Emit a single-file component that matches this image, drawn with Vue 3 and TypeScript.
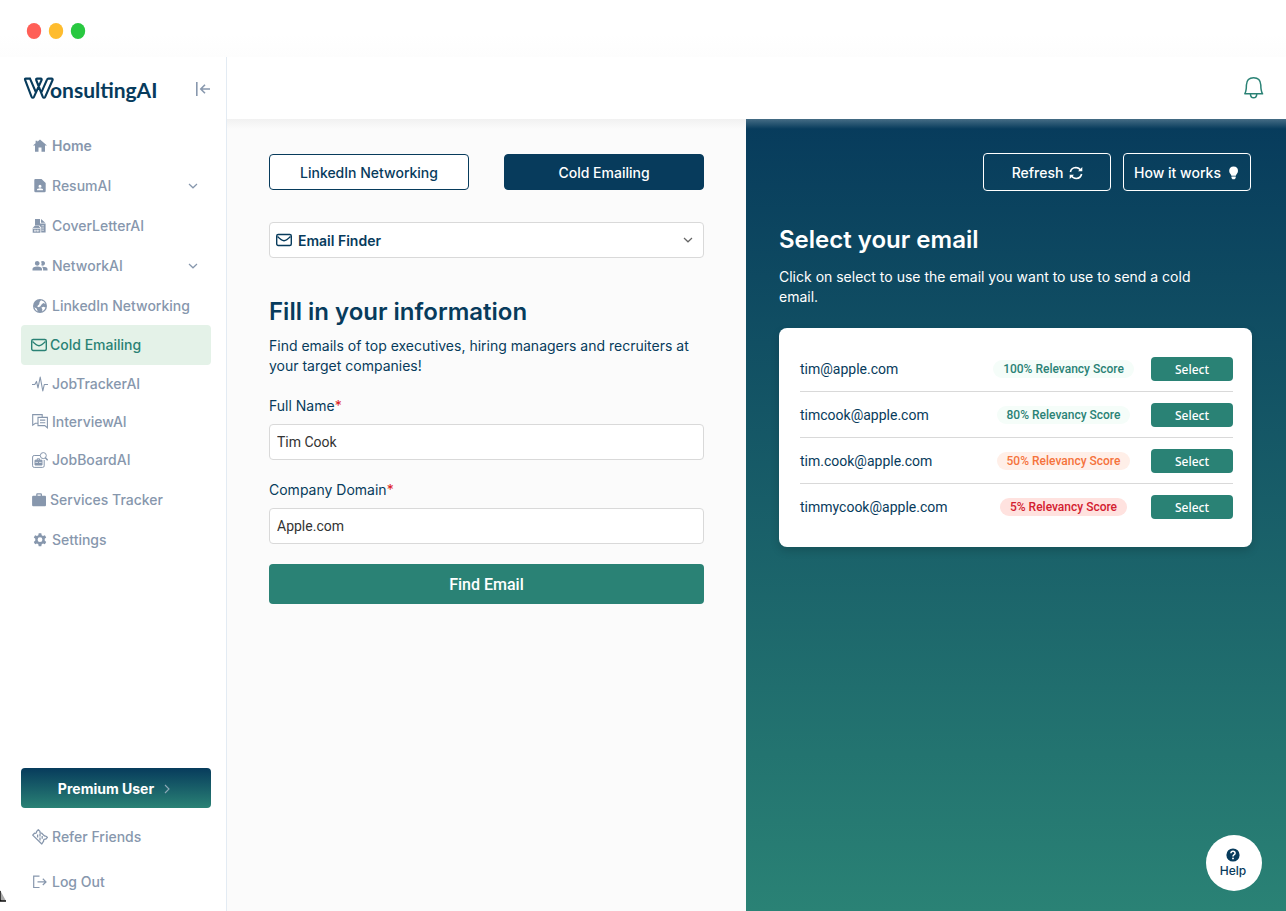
<script setup lang="ts">
import { ref } from 'vue'

interface NavItem {
  label: string
  icon: string
  expandable?: boolean
  size?: string
}

interface EmailMatch {
  email: string
  score: number
  tone: 'good' | 'fair' | 'poor'
}

const navItems: NavItem[] = [
  { label: 'Home', icon: 'home', size: 'strong' },
  { label: 'ResumAI', icon: 'resume', expandable: true },
  { label: 'CoverLetterAI', icon: 'letter' },
  { label: 'NetworkAI', icon: 'people', expandable: true },
  { label: 'LinkedIn Networking', icon: 'globe', size: 'snug' },
  { label: 'Cold Emailing', icon: 'mail', size: 'active' },
  { label: 'JobTrackerAI', icon: 'pulse', size: 'compact' },
  { label: 'InterviewAI', icon: 'chat', size: 'compact' },
  { label: 'JobBoardAI', icon: 'board', size: 'compact' },
  { label: 'Services Tracker', icon: 'case', size: 'tight' },
  { label: 'Settings', icon: 'gear' },
]

const matches: EmailMatch[] = [
  { email: 'tim@apple.com', score: 100, tone: 'good' },
  { email: 'timcook@apple.com', score: 80, tone: 'good' },
  { email: 'tim.cook@apple.com', score: 50, tone: 'fair' },
  { email: 'timmycook@apple.com', score: 5, tone: 'poor' },
]

const tool = ref('Email Finder')
const fullName = ref('Tim Cook')
const domain = ref('Apple.com')
</script>

<template>
  <div class="window">
    <div class="titlebar">
      <svg width="60" height="18" viewBox="0 0 60 18" aria-hidden="true">
        <ellipse cx="8" cy="9" rx="7.2" ry="8" fill="#ff5f57" />
        <ellipse cx="30" cy="9" rx="7.2" ry="8" fill="#febc2e" />
        <ellipse cx="52" cy="9" rx="7.2" ry="8" fill="#28c840" />
      </svg>
    </div>

    <div class="shell">
      <aside class="sidebar">
        <div class="brand-row">
          <a class="brand" href="#" aria-label="WonsultingAI">
            <svg width="32" height="24" viewBox="0 0 32 24" fill="none" stroke="#073b5c" stroke-width="2.1" stroke-linejoin="round" stroke-linecap="round" aria-hidden="true">
              <path d="M7 1.6H2.8Q1.6 1.6 2.1 2.8L8.4 19.4Q9.8 22 11.2 19.4L18.6 3Q19 1.6 17.8 1.6H14.2Q12.8 1.6 13.2 3L19.6 19.4Q21 22 22.4 19.4L29.6 3Q30 1.6 28.7 1.6H25.4Q24.4 1.6 24 2.6L18.6 14.8M7 1.6L12.8 15" />
            </svg>
            <span>onsultingAI</span>
          </a>
          <button class="collapse" type="button" aria-label="Collapse sidebar">
            <svg width="16" height="14" viewBox="0 0 16 14" fill="none" stroke="#8898ae" stroke-width="1.6"><path d="M1.8 0V14M15 7H6M10 2.8L5.8 7L10 11.2" /></svg>
          </button>
        </div>

        <nav class="nav" aria-label="Main">
          <a v-for="item in navItems" :key="item.label" href="#" class="nav-item" :class="item.size">
            <svg class="icon" viewBox="0 0 16 16" width="16" height="16" aria-hidden="true">
              <path v-if="item.icon === 'home'" fill="currentColor" d="M8 1.4L15 7.6H13V13.8H9.5V9.6H6.5V13.8H3V7.6H1L3.6 5.3V2.8H5.4V3.7Z" />
              <path v-else-if="item.icon === 'resume'" fill="currentColor" fill-rule="evenodd" d="M3.3 1H9.5L13.7 5V12.9Q13.7 14.2 12.4 14.2H3.6Q2.3 14.2 2.3 12.9V2Q2.3 1 3.3 1ZM8 6.7A1.5 1.5 0 1 0 8 9.7A1.5 1.5 0 1 0 8 6.7M5 12.2H11V11.7Q11 10.2 8 10.2T5 11.7Z" />
              <g v-else-if="item.icon === 'letter'" fill="currentColor">
                <path d="M3 1H8V5.6H13.6V14.5H9.2V9.5L7.5 7.5H3ZM9 1L13.3 4.8H9Z" />
                <path d="M2.8 7.8H6.6L8.4 9.9V14.8H.7V9.9Z" />
                <path stroke="#fff" stroke-width=".7" fill="none" d="M.8 10.4H8.4M2 12.8H7.4M3 11.6V13.8M5.8 11.6V13.8M9.5 7.8H12M9.5 10H12M9.5 12.2H12" />
              </g>
              <path v-else-if="item.icon === 'people'" fill="currentColor" d="M5.3 2.9A2.4 2.4 0 1 1 5.2 7.7A2.4 2.4 0 0 1 5.3 2.9M10.8 2.9A2.4 2.4 0 1 1 9.3 7.3Q10.1 5.3 9 3.6Q9.7 2.9 10.8 2.9M.5 12.4V11.1Q.5 8.6 5.2 8.6T10 11.1V12.4ZM11.1 12.4V11Q11 9.6 9.8 8.8Q15.5 8.7 15.5 11.1V12.4Z" />
              <g v-else-if="item.icon === 'globe'">
                <circle cx="8" cy="8" r="7" fill="currentColor" />
                <path fill="#fff" d="M9 2.2Q12.4 2.8 13.6 6L11.2 5L9.6 6.4L8.2 8.6L6.2 9.2L5.2 8.2L7.2 6.2L7.6 4ZM9.4 9.6L11.4 8.8L13.6 9.6Q12.6 12.4 10 13.5L10.4 11.4ZM2.3 9.2L4.6 10.4L5.8 13.4Q3.2 12.2 2.3 9.2Z" />
              </g>
              <g v-else-if="item.icon === 'mail'" fill="none" stroke="currentColor" stroke-width="1.4">
                <rect x=".7" y="2.5" width="14.6" height="11" rx="1.5" /><path d="M1.5 4.5Q5.5 8.5 8 8.7Q10.5 8.5 14.5 4.5" />
              </g>
              <path v-else-if="item.icon === 'pulse'" fill="none" stroke="currentColor" stroke-width="1.1" stroke-linejoin="round" d="M0 8.5H2.8L4.5 5.4L6 12L8.2 1L10.8 15L12.3 8.5H16" />
              <path v-else-if="item.icon === 'chat'" fill="none" stroke="currentColor" stroke-width="1.1" d="M5.5 9.2H3.4L.7 11.1V.6H10.2V3.1M6 3.4H15.4V13.8L12.8 11.6H6ZM8 6.1H13.3M8 8.7H13.3" />
              <g v-else-if="item.icon === 'board'" fill="none" stroke="currentColor" stroke-width="1">
                <path d="M8 3.5H2.2Q.6 3.5 .6 5V13.8Q.6 15.4 2.2 15.4H10.6Q12.2 15.4 12.2 13.8V8" />
                <circle cx="11.3" cy="3.6" r="3" /><path d="M13.3 5.7L15.7 8.2" stroke-width="1.4" />
                <path d="M5.2 8V6.8H7.6V8" /><path d="M3 8.2H10V13H3Z" fill="currentColor" /><path d="M3.4 10.4H9.6" stroke="#fff" stroke-width=".7" /><path d="M6.5 9.8V11.2" />
              </g>
              <path v-else-if="item.icon === 'case'" fill="currentColor" fill-rule="evenodd" d="M4.2 3.8V2.5Q4.2 1.3 5.3 1.3H8.8Q10 1.3 10 2.5V3.8H13Q14 3.8 14 5V13Q14 14.2 13 14.2H1.2Q.1 14.2 .1 13V5Q.1 3.8 1.2 3.8ZM5.5 3.8H8.7V2.6H5.5Z" />
              <path v-else fill="currentColor" fill-rule="evenodd" d="M6.7 1.2H9.3L9.7 3.2L11 3.9L12.9 3.2L14.2 5.4L12.7 6.8V8.6L14.2 10L12.9 12.2L11 11.5L9.7 12.3L9.3 14.3H6.7L6.3 12.3L5 11.5L3.1 12.2L1.8 10L3.3 8.6V6.8L1.8 5.4L3.1 3.2L5 3.9L6.3 3.2ZM8 5.3A2.4 2.4 0 1 0 8 10.1A2.4 2.4 0 1 0 8 5.3" />
            </svg>
            <span>{{ item.label }}</span>
            <svg v-if="item.expandable" class="chevron" width="10" height="6" viewBox="0 0 10 6" fill="none" stroke="currentColor" stroke-width="1.2" aria-hidden="true"><path d="M1 1L5 4.8L9 1" /></svg>
          </a>
        </nav>

        <div class="account">
          <button class="premium" type="button">
            Premium User
            <svg width="6" height="10" viewBox="0 0 6 10" fill="none" stroke="#8fa9b8" stroke-width="1.1" aria-hidden="true"><path d="M1 1L5 5L1 9" /></svg>
          </button>
          <a href="#" class="nav-item">
            <svg class="icon" viewBox="0 0 16 16" width="16" height="16" fill="none" stroke="currentColor" stroke-width="1.3" stroke-linejoin="round" aria-hidden="true">
              <path d="M6.3 .7L8 2.4Q7.6 4.4 9.8 4.2L11.8 6.4L13.2 7.2Q14 6.6 15.4 8.4L13.7 10.2Q11.4 9.8 11.6 12.2L9.8 15L.7 6.1L2.5 4.2Q4.8 4.8 4.5 2.6Z" /><path d="M8 4.6V7.4M8 8.6V11.6M5.6 5.6V8.4M10.2 7V9.8" />
            </svg>
            <span>Refer Friends</span>
          </a>
          <a href="#" class="nav-item">
            <svg class="icon" viewBox="0 0 16 16" width="16" height="16" fill="none" stroke="currentColor" stroke-width="1.2" aria-hidden="true">
              <path d="M7.5 2.2H1.7V13.5H7.5M5.5 7.9H14M10.8 4.8L14 7.9L10.8 11" />
            </svg>
            <span>Log Out</span>
          </a>
        </div>
        <svg class="corner" width="6" height="12" viewBox="0 0 6 12" aria-hidden="true"><path d="M0 0L6 11H0Z" fill="#aaa" /><path d="M0 1V10L1.5 11M0 11H6" stroke="#111" stroke-width="1.4" fill="none" /></svg>
      </aside>

      <div class="page">
        <header class="topbar">
          <button class="bell" type="button" aria-label="Notifications">
            <svg width="20" height="22" viewBox="0 0 20 22" fill="none" stroke="#2a8275" stroke-width="1.5" stroke-linejoin="round"><path d="M.8 16.8Q2.4 14 2.4 8Q2.8 .8 9.6 .8T16.8 8Q16.8 14 18.6 16.8ZM6.4 17Q6.6 20.8 9.6 20.8T12.8 17" /></svg>
          </button>
        </header>

        <main class="panels">
          <section class="finder">
            <div class="tabs">
              <button type="button" class="tab">LinkedIn Networking</button>
              <button type="button" class="tab selected">Cold Emailing</button>
            </div>

            <div class="picker">
              <svg class="picker-icon" width="16" height="16" viewBox="0 0 16 16" fill="none" stroke="currentColor" stroke-width="1.4" aria-hidden="true"><rect x=".7" y="2.5" width="14.6" height="11" rx="1.5" /><path d="M1.5 4.5Q5.5 8.5 8 8.7Q10.5 8.5 14.5 4.5" /></svg>
              <select v-model="tool" aria-label="Tool">
                <option>Email Finder</option>
              </select>
              <svg class="picker-chevron" width="10" height="6" viewBox="0 0 10 6" fill="none" stroke="#666" stroke-width="1.2" aria-hidden="true"><path d="M1 1L5 4.8L9 1" /></svg>
            </div>

            <h1>Fill in your information</h1>
            <p class="intro">Find emails of top executives, hiring managers and recruiters at your target companies!</p>

            <form @submit.prevent>
              <label for="full-name">Full Name<span class="required">*</span></label>
              <input id="full-name" v-model="fullName" type="text" />
              <label for="domain">Company Domain<span class="required">*</span></label>
              <input id="domain" v-model="domain" type="text" />
              <button class="submit" type="submit">Find Email</button>
            </form>
          </section>

          <section class="results">
            <div class="actions">
              <button type="button">
                Refresh
                <svg width="14" height="14" viewBox="0 0 14 14" fill="none" stroke="#fff" stroke-width="1.6" aria-hidden="true"><path d="M1.4 6Q2.2 1.8 6.8 1.5Q10 1.5 12 4.6M12.6 8Q11.8 12.2 7.2 12.5Q4 12.5 2 9.4" /><path d="M13.3 1V5.3H9ZM.7 13V8.7H5Z" fill="#fff" stroke="none" /></svg>
              </button>
              <button type="button">
                How it works
                <svg width="14" height="14" viewBox="0 0 14 14" fill="#fff" aria-hidden="true"><path d="M6.6 .6Q11 .8 11 5Q11 6.8 9.4 8.4L8.8 9.8H4.4L3.8 8.4Q2.2 6.8 2.2 5Q2.2 .8 6.6 .6M4.5 10.5H8.7V12L7.6 13.3H5.6L4.5 12Z" /></svg>
              </button>
            </div>
            <h2>Select your email</h2>
            <p class="hint">Click on select to use the email you want to use to send a cold email.</p>
            <div class="card">
              <table aria-label="Email matches">
                <tbody>
                  <tr v-for="match in matches" :key="match.email">
                    <td class="email">{{ match.email }}</td>
                    <td class="score"><span class="pill" :class="match.tone">{{ match.score }}% Relevancy Score</span></td>
                    <td class="pick"><button type="button">Select</button></td>
                  </tr>
                </tbody>
              </table>
            </div>
          </section>
        </main>
      </div>
    </div>

    <button class="help" type="button">
      <svg width="14" height="14" viewBox="0 0 14 14" aria-hidden="true"><circle cx="7" cy="7" r="6.6" fill="#073b5c" /><path d="M4.9 5.3Q5 3.3 7 3.3T9.1 5.2Q9.1 6.2 7.9 6.9Q7 7.4 7 8.5" fill="none" stroke="#fff" stroke-width="1.5" /><circle cx="7" cy="10.4" r=".95" fill="#fff" /></svg>
      Help
    </button>
  </div>
</template>

<style>
body {
  margin: 0;
}
</style>

<style scoped>
.window {
  --navy: #073b5c;
  --green: #2a8275;
  --slate: #8797ad;
  display: flex;
  flex-direction: column;
  min-height: 100vh;
  background: #fff;
  color: var(--navy);
  font-family: Inter, "Liberation Sans", sans-serif;
  font-size: 14px;
  line-height: 20px;
}

.window *,
.window *::before {
  box-sizing: border-box;
}

button,
input,
select {
  font: inherit;
  color: inherit;
}

button {
  padding: 0;
  border: 0;
  background: none;
  cursor: pointer;
}

svg {
  display: block;
  flex: none;
}

a {
  color: inherit;
  text-decoration: none;
}

.titlebar {
  height: 57px;
  padding: 22px 26px 0;
  background: linear-gradient(#fff 60%, #fdfdfd);
}

.shell {
  display: flex;
  flex: 1;
}

.sidebar {
  position: relative;
  display: flex;
  flex-direction: column;
  flex: none;
  width: 227px;
  padding-bottom: 9px;
  border-right: 1px solid #e3ebf3;
}

.brand-row {
  display: flex;
  align-items: center;
  justify-content: space-between;
  height: 64px;
  margin-bottom: 5px;
  padding: 0 15px 0 23px;
}

.brand {
  display: flex;
  align-items: center;
  font-family: Lato, sans-serif;
  font-size: 21px;
  font-weight: 700;
  line-height: 28px;
}

.brand span {
  margin-left: -5px;
  padding-top: 2px;
}

.nav-item {
  display: flex;
  align-items: center;
  gap: 4px;
  height: 40px;
  margin: 0 15px 0 21px;
  padding: 0 13px 0 11px;
  border-radius: 4px;
  color: var(--slate);
  font-weight: 500;
}

.nav-item.snug {
  height: 39px;
}

.nav-item.compact {
  height: 38px;
}

.nav-item.strong {
  font-weight: 600;
}

.nav-item.tight {
  gap: 2px;
  height: 41px;
}

.nav-item.active {
  gap: 3px;
  padding-left: 10px;
  background: #e4f2e8;
  color: var(--green);
}

.chevron {
  margin-left: auto;
}

.account {
  margin-top: auto;
}

.premium {
  display: flex;
  align-items: center;
  justify-content: center;
  gap: 10px;
  width: 190px;
  height: 40px;
  margin: 0 0 9px 21px;
  padding: 1px 4px 0 0;
  border-radius: 4px;
  background: linear-gradient(#073b5c, #2a8275);
  color: #fff;
  font-weight: 700;
}

.account .nav-item + .nav-item {
  margin-top: 5px;
}

.corner {
  position: absolute;
  left: 0;
  bottom: 9px;
}

.page {
  display: flex;
  flex: 1;
  flex-direction: column;
  min-width: 0;
}

.topbar {
  display: flex;
  align-items: center;
  justify-content: flex-end;
  height: 62px;
  padding: 0 22px;
}

.panels {
  display: grid;
  flex: 1;
  grid-template-columns: 519fr 540fr;
}

.finder {
  padding: 35px 42px;
  background: linear-gradient(#f1f1f1, #fbfbfb 10px);
}

.tabs {
  display: grid;
  grid-template-columns: 1fr 1fr;
  gap: 35px;
}

.tab {
  height: 36px;
  padding-top: 1px;
  border: 1px solid var(--navy);
  border-radius: 4px;
  background: #fff;
  font-weight: 500;
}

.tab.selected {
  background: var(--navy);
  color: #fff;
}

.picker {
  position: relative;
  margin-top: 32px;
}

.picker select {
  display: block;
  width: 100%;
  height: 36px;
  padding: 1px 28px 0;
  border: 1px solid #d9d9d9;
  border-radius: 4px;
  background: #fff;
  appearance: none;
  font-weight: 600;
}

.picker-icon,
.picker-chevron {
  position: absolute;
  pointer-events: none;
}

.picker-icon {
  top: 10px;
  left: 7px;
}

.picker-chevron {
  top: 15px;
  right: 11px;
}

h1,
h2 {
  margin: 0;
  font-size: 24px;
  font-weight: 600;
  line-height: 32px;
}

h1 {
  margin-top: 38px;
}

.intro {
  margin: 8px 0 20px;
}

label {
  display: block;
}

.required {
  color: #dc2020;
}

input {
  display: block;
  width: 100%;
  height: 36px;
  margin: 8px 0 20px;
  padding: 0 7px;
  border: 1px solid #d9d9d9;
  border-radius: 4px;
  background: #fff;
  color: #333;
  font-family: Roboto, sans-serif;
}

.submit {
  width: 100%;
  height: 40px;
  padding-top: 1px;
  border-radius: 4px;
  background: var(--green);
  color: #fff;
  font-family: Roboto, sans-serif;
  font-size: 16px;
  font-weight: 500;
}

.results {
  padding: 34px 34px 34px 33px;
  background: linear-gradient(rgba(255, 255, 255, 0.25), rgba(255, 255, 255, 0) 10px), linear-gradient(#073b5c, #2a8275);
  color: #fff;
}

.actions {
  display: flex;
  justify-content: flex-end;
  gap: 12px;
  padding-right: 1px;
}

.actions button {
  display: flex;
  align-items: center;
  justify-content: center;
  gap: 6px;
  width: 128px;
  height: 38px;
  padding: 1px 0 0 1px;
  border: 1px solid #fff;
  border-radius: 4px;
  font-weight: 500;
}

h2 {
  margin-top: 33px;
}

.hint {
  max-width: 440px;
  margin: 11px 0 21px;
}

.card {
  padding: 18px 19px 17px 21px;
  border-radius: 8px;
  background: #fff;
  box-shadow: 0 4px 8px rgba(0, 0, 0, 0.15);
  color: var(--navy);
}

table {
  width: 100%;
  border-spacing: 0;
}

td {
  height: 46px;
  padding: 0;
  border-bottom: 1px solid #d9d9d9;
}

tr:last-child td {
  border-bottom-color: transparent;
}

.email {
  font-family: Roboto, sans-serif;
}

.score {
  width: 175px;
  text-align: center;
}

.pill {
  display: block;
  width: fit-content;
  margin: 0 auto;
  padding: 0 10px;
  border-radius: 9px;
  font-family: Roboto, sans-serif;
  font-size: 12px;
  font-weight: 500;
  line-height: 18px;
}

.good {
  background: #f5fdf9;
  color: var(--green);
}

.fair {
  background: #ffefe8;
  color: #f5733c;
}

.poor {
  background: #ffe2df;
  color: #d3202f;
}

.pick {
  width: 82px;
}

.pick button {
  display: block;
  width: 82px;
  height: 24px;
  padding-top: 2px;
  border-radius: 4px;
  background: var(--green);
  color: #fff;
  font-family: "Noto Sans", sans-serif;
  font-size: 12px;
  font-weight: 500;
}

.help {
  position: fixed;
  right: 24px;
  bottom: 20px;
  display: flex;
  flex-direction: column;
  align-items: center;
  justify-content: center;
  width: 56px;
  height: 56px;
  padding: 1px 2px 0 0;
  border-radius: 50%;
  background: #fff;
  font-size: 12px;
  font-weight: 500;
  line-height: 18px;
}
</style>
